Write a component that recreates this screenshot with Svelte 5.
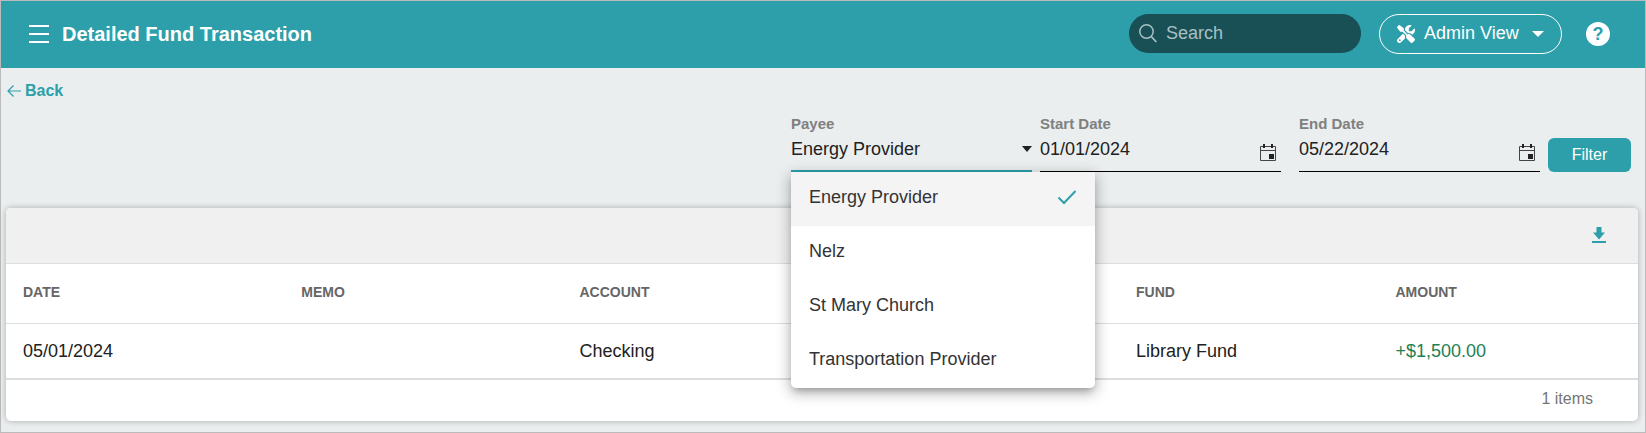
<script lang="ts">
	type Row = { date: string; memo: string; account: string; payee: string; fund: string; amount: string };

	const payees = ['Energy Provider', 'Nelz', 'St Mary Church', 'Transportation Provider'];

	const rows: Row[] = [
		{ date: '05/01/2024', memo: '', account: 'Checking', payee: '', fund: 'Library Fund', amount: '+$1,500.00' },
	];

	let payee = $state('Energy Provider');
	let menuOpen = $state(true);
	let startDate = $state('01/01/2024');
	let endDate = $state('05/22/2024');
	let search = $state('');

	function openMenu(e: Event) {
		e.preventDefault();
		menuOpen = !menuOpen;
	}

	function pick(name: string) {
		payee = name;
		menuOpen = false;
	}
</script>

{#snippet calendar()}
	<svg width="16" height="17" viewBox="0 0 16 17" aria-hidden="true">
		<path d="M.5 2.5h15v14H.5zM.5 6.5h15" fill="none" stroke="#444" />
		<path d="M3 0h2v4H3zM11 0h2v4h-2zM9 10h5v5H9z" fill="#222" />
	</svg>
{/snippet}

<div class="page">
	<header>
		<button class="icon-btn" aria-label="Menu">
			<svg width="20" height="18" viewBox="0 0 20 18" aria-hidden="true">
				<path d="M0 1h20M0 9h20M0 17h20" stroke="#fff" stroke-width="2" />
			</svg>
		</button>
		<h1>Detailed Fund Transaction</h1>

		<label class="search">
			<svg width="18" height="19" viewBox="0 0 18 19" aria-hidden="true">
				<circle cx="7.5" cy="7.5" r="6.7" fill="none" stroke="#a9c0c3" stroke-width="1.5" />
				<path d="M12.3 12.5l5 5.5" stroke="#a9c0c3" stroke-width="1.8" />
			</svg>
			<input type="text" placeholder="Search" aria-label="Search" bind:value={search} />
		</label>

		<button class="view">
			<svg width="18" height="18" viewBox="0 0 512 512" fill="#fff" aria-hidden="true">
				<path d="M78.6 5C69.1-2.4 55.6-1.5 47 7L7 47c-8.5 8.5-9.4 22-2.1 31.6l80 104c4.5 5.9 11.6 9.4 19 9.4h54.1l109 109c-14.7 29-10 65.4 14.3 89.6l112 112c12.5 12.5 32.8 12.5 45.3 0l64-64c12.5-12.5 12.5-32.8 0-45.3l-112-112c-24.2-24.2-60.6-29-89.6-14.3l-109-109V104c0-7.5-3.5-14.5-9.4-19L78.6 5zM19.9 396.1C7.2 408.8 0 426.1 0 444.1C0 481.6 30.4 512 67.9 512c18 0 35.3-7.2 48-19.9L233.7 374.3c-7.8-20.9-9-43.6-3.6-65.1l-61.7-61.7L19.9 396.1zM512 144c0-10.5-1.1-20.7-3.2-30.5c-2.4-11.2-16.1-14.1-24.2-6l-63.9 63.9c-3 3-7.1 4.7-11.3 4.7H352c-8.8 0-16-7.2-16-16V102.6c0-4.2 1.7-8.3 4.7-11.3l63.9-63.9c8.1-8.1 5.2-21.8-6-24.2C388.7 1.1 378.5 0 368 0C288.5 0 224 64.5 224 144l0 .8 85.3 85.3c36-9.1 75.8 .5 104 28.7L429 274.5c49-23 83-72.8 83-130.5zM56 432a24 24 0 1 1 48 0 24 24 0 1 1-48 0z" />
			</svg>
			<span>Admin View</span>
			<svg width="12" height="6" viewBox="0 0 12 6" aria-hidden="true">
				<path d="M0 0h12L6 6z" fill="#fff" />
			</svg>
		</button>

		<button class="help" aria-label="Help">?</button>
	</header>

	<main>
		<a class="back" href="#back">
			<svg width="14" height="12" viewBox="0 0 14 12" aria-hidden="true">
				<path d="M6.5.5L1 6l5.500 5.500M1 6h13" fill="none" stroke="#2c9faa" stroke-width="1.2" />
			</svg>
			Back
		</a>

		<form class="filters" onsubmit={(e) => e.preventDefault()}>
			<div class="field">
				<label for="payee">Payee</label>
				<div class="control active">
					<select id="payee" bind:value={payee} onmousedown={openMenu}>
						{#each payees as name}
							<option>{name}</option>
						{/each}
					</select>
					<svg class="caret" width="10" height="6" viewBox="0 0 10 6" aria-hidden="true">
						<path d="M0 0h10L5 6z" fill="#222" />
					</svg>
				</div>
				{#if menuOpen}
					<div class="menu" role="listbox" aria-label="Payee">
						{#each payees as name}
							<button
								type="button"
								role="option"
								aria-selected={name === payee}
								class:selected={name === payee}
								onclick={() => pick(name)}
							>
								{name}
								{#if name === payee}
									<svg width="20" height="16" viewBox="0 0 20 16" aria-hidden="true">
										<path d="M1.500 8.500l5.500 5.500L18.500 2" fill="none" stroke="#2c9faa" stroke-width="2" />
									</svg>
								{/if}
							</button>
						{/each}
					</div>
				{/if}
			</div>

			<div class="dates">
				<div class="field">
					<label for="start">Start Date</label>
					<div class="control">
						<input id="start" type="text" bind:value={startDate} />
						<button type="button" class="icon-btn" aria-label="Choose start date">{@render calendar()}</button>
					</div>
				</div>
				<div class="field">
					<label for="end">End Date</label>
					<div class="control">
						<input id="end" type="text" bind:value={endDate} />
						<button type="button" class="icon-btn" aria-label="Choose end date">{@render calendar()}</button>
					</div>
				</div>
			</div>

			<button class="submit">Filter</button>
		</form>

		<section class="card">
			<div class="toolbar">
				<button class="icon-btn" aria-label="Download">
					<svg width="14" height="16" viewBox="0 0 14 16" fill="#2c9faa" aria-hidden="true">
						<path d="M4.500 0h5v5.500H13L7 12.500 1 5.500h3.500zM0 14h14v2H0z" />
					</svg>
				</button>
			</div>
			<table>
				<thead>
					<tr>
						<th>DATE</th>
						<th>MEMO</th>
						<th>ACCOUNT</th>
						<th></th>
						<th class="narrow">FUND</th>
						<th class="narrow">AMOUNT</th>
					</tr>
				</thead>
				<tbody>
					{#each rows as row}
						<tr>
							<td>{row.date}</td>
							<td>{row.memo}</td>
							<td>{row.account}</td>
							<td>{row.payee}</td>
							<td>{row.fund}</td>
							<td class="amount">{row.amount}</td>
						</tr>
					{/each}
				</tbody>
			</table>
			<div class="count">{rows.length} items</div>
		</section>
	</main>
</div>

<style>
	:global(body) {
		background: #eaeeef;
	}

	.page {
		box-sizing: border-box;
		min-height: 100vh;
		border: 1px solid #bbb;
		background: #eaeeef;
		color: #212121;
		font-family: "Liberation Sans", Arial, sans-serif;
		font-size: 18px;
	}

	.page * {
		box-sizing: border-box;
	}

	svg {
		display: block;
		flex: none;
	}

	button,
	input,
	select {
		font: inherit;
		color: inherit;
		margin: 0;
		padding: 0;
		border: 0;
		background: none;
	}

	button {
		cursor: pointer;
	}

	input,
	select {
		min-width: 0;
		flex: 1;
		outline: none;
	}

	header {
		display: flex;
		align-items: center;
		height: 67px;
		padding: 0 35px 2px 28px;
		background: #2c9faa;
		color: #fff;
	}

	h1 {
		margin: 0 auto 0 13px;
		font-size: 20px;
		line-height: 24px;
	}

	.search {
		display: flex;
		align-items: center;
		gap: 9px;
		width: 232px;
		height: 39px;
		padding: 0 10px;
		border-radius: 20px;
		background: #185055;
	}

	.search input::placeholder {
		color: #a9c0c3;
		opacity: 1;
	}

	.view {
		display: flex;
		align-items: center;
		gap: 9px;
		width: 183px;
		height: 40px;
		margin: 0 24px 0 18px;
		padding: 0 17px;
		border: 1px solid #fff;
		border-radius: 20px;
	}

	.view span {
		flex: 1;
		text-align: left;
		white-space: nowrap;
	}

	.help {
		width: 24px;
		height: 24px;
		border-radius: 12px;
		background: #fff;
		color: #2c9faa;
		font-size: 18px;
		font-weight: bold;
		line-height: 24px;
	}

	main {
		padding: 12px 7px 11px 5px;
	}

	.back {
		display: flex;
		align-items: center;
		gap: 4px;
		width: max-content;
		margin-left: 1px;
		color: #2c9faa;
		font-size: 16px;
		font-weight: bold;
		line-height: 22px;
		text-decoration: none;
	}

	.filters {
		display: flex;
		justify-content: flex-end;
		align-items: flex-end;
		gap: 8px;
		margin: 13px 7px 36px;
	}

	.dates {
		display: flex;
		gap: 18px;
	}

	.field {
		position: relative;
		width: 241px;
	}

	.field label {
		display: block;
		color: #808080;
		font-size: 15px;
		font-weight: bold;
		line-height: 18px;
	}

	.control {
		display: flex;
		align-items: center;
		height: 39px;
		border-bottom: 1px solid #000;
	}

	.control.active {
		border-bottom: 2px solid #2c9faa;
	}

	.control input,
	.control select {
		height: 32px;
		align-self: flex-start;
	}

	.control .icon-btn {
		margin-right: 5px;
	}

	select {
		appearance: none;
	}

	.caret {
		margin-bottom: 6px;
	}

	.menu {
		position: absolute;
		top: 100%;
		left: 0;
		z-index: 2;
		width: 304px;
		border-radius: 0 0 5px 5px;
		overflow: hidden;
		background: #fff;
		box-shadow: 0 5px 6px -3px rgba(0, 0, 0, 0.2), 0 4px 14px 1px rgba(0, 0, 0, 0.3);
	}

	.menu button {
		display: flex;
		justify-content: space-between;
		align-items: center;
		width: 100%;
		height: 54px;
		padding: 0 18px 4px;
		color: #333;
		text-align: left;
	}

	.menu .selected {
		background: #f4f4f4;
	}

	.submit {
		width: 83px;
		height: 34px;
		border-radius: 6px;
		background: #2c9faa;
		color: #fff;
		font-size: 16px;
	}

	.card {
		border-radius: 5px;
		background: #fff;
		box-shadow: 0 0 6px rgba(0, 0, 0, 0.28);
	}

	.toolbar {
		display: flex;
		justify-content: flex-end;
		align-items: center;
		height: 56px;
		padding: 0 32px 2px;
		border-bottom: 1px solid #ddd;
		border-radius: 5px 5px 0 0;
		background: #f0f0f0;
	}

	table {
		width: 100%;
		table-layout: fixed;
		border-collapse: separate;
		border-spacing: 0;
	}

	th,
	td {
		padding: 0 17px;
		text-align: left;
	}

	th {
		width: 17.05%;
		height: 60px;
		padding-bottom: 4px;
		border-bottom: 1px solid #ddd;
		color: #666;
		font-size: 14px;
	}

	th.narrow {
		width: 15.9%;
	}

	td {
		height: 56px;
		border-bottom: 2px solid #ddd;
	}

	.amount {
		color: #1e8055;
	}

	.count {
		padding: 9px 45px 12px;
		color: #757575;
		font-size: 16px;
		line-height: 20px;
		text-align: right;
	}
</style>
